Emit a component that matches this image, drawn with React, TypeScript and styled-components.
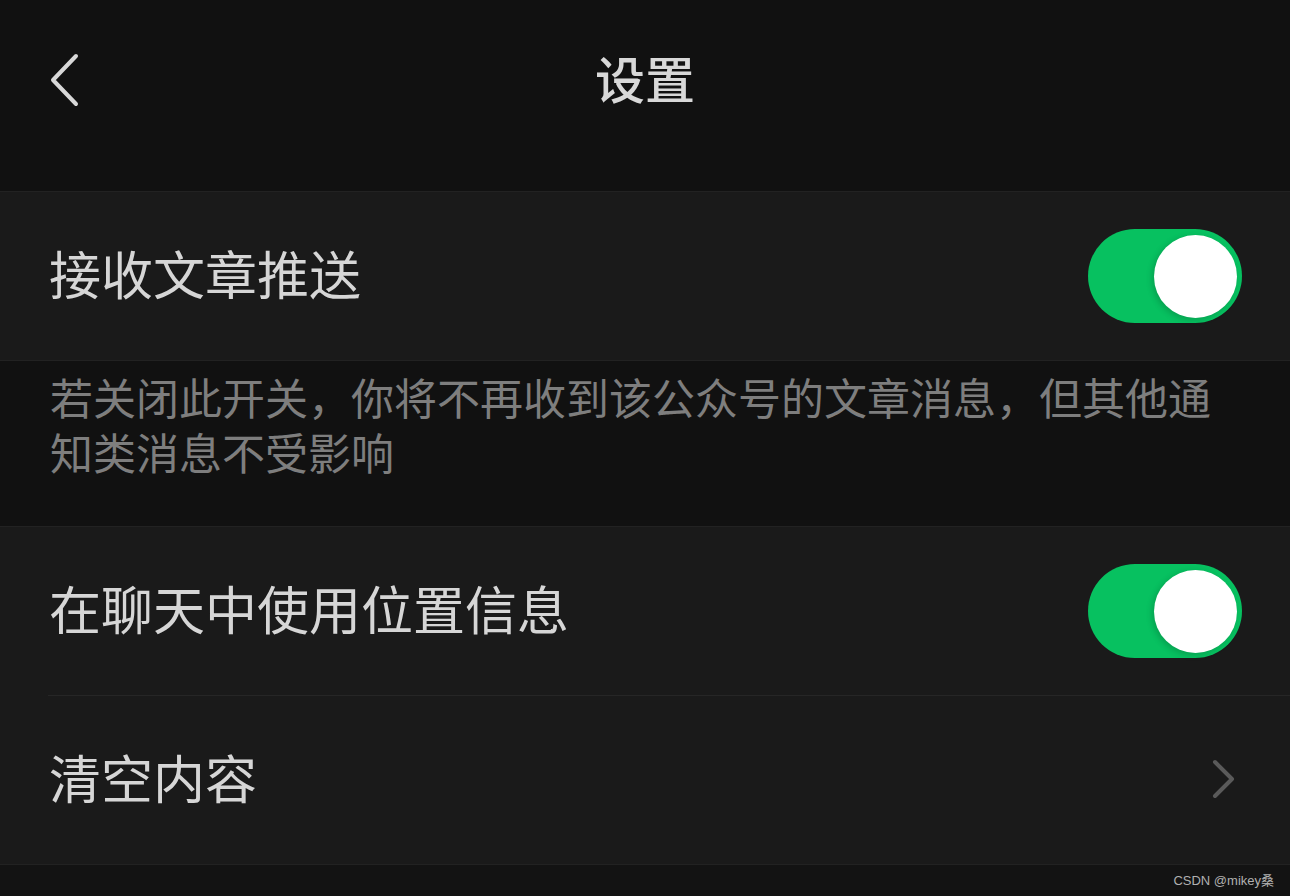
import React from "react";
import styled, { createGlobalStyle } from "styled-components";

const GlobalStyle = createGlobalStyle`
  html, body {
    margin: 0;
    padding: 0;
    background: #111111;
  }
  body {
    font-family: "Noto Sans CJK SC", "Noto Sans", sans-serif;
  }
`;

const Page = styled.div`
  width: 1290px;
  height: 896px;
  background: #111111;
  display: flex;
  flex-direction: column;
  overflow: hidden;
`;

const Header = styled.div`
  height: 191px;
  display: flex;
  align-items: flex-start;
  position: relative;
  border-bottom: 1px solid #222222;
`;

const BackButton = styled.div`
  position: absolute;
  left: 49px;
  top: 52px;
  width: 34px;
  height: 56px;
  display: flex;
  align-items: center;
  justify-content: center;
`;

const Title = styled.div`
  flex: 1;
  text-align: center;
  margin-top: 41px;
  font-size: 50px;
  line-height: 72px;
  font-weight: 500;
  color: #d8d8d8;
`;

const Group = styled.div`
  background: #1a1a1a;
  display: flex;
  flex-direction: column;
  border-bottom: 1px solid #222222;
`;

const Row = styled.div<{ divider?: boolean }>`
  height: 168px;
  margin-left: 48px;
  padding-right: 48px;
  display: flex;
  align-items: center;
  justify-content: space-between;
  border-bottom: ${(p) => (p.divider ? "1px solid #262626" : "none")};
`;

const Label = styled.div`
  font-size: 52px;
  line-height: 72px;
  color: #d6d6d6;
  padding-left: 1px;
  margin-bottom: 6px;
`;

const Switch = styled.div<{ on: boolean }>`
  width: 154px;
  height: 94px;
  border-radius: 47px;
  background: ${(p) => (p.on ? "#07c160" : "#3a3a3a")};
  display: flex;
  align-items: center;
  justify-content: ${(p) => (p.on ? "flex-end" : "flex-start")};
  padding: 0 5px;
  box-sizing: border-box;
`;

const Knob = styled.div`
  width: 83px;
  height: 83px;
  border-radius: 50%;
  background: #ffffff;
  box-shadow: -2px 2px 6px rgba(0, 0, 0, 0.18);
`;

const Tip = styled.div`
  height: 166px;
  box-sizing: border-box;
  padding: 8px 70px 0 50px;
  font-size: 43px;
  line-height: 55px;
  color: #7e7e7e;
  border-bottom: 1px solid #222222;
`;

const Footer = styled.div`
  flex: 1;
  display: flex;
  justify-content: flex-end;
  align-items: center;
  padding-right: 16px;
  padding-bottom: 2px;
  background: #131313;
`;

const Watermark = styled.span`
  font-family: "Liberation Sans", "Noto Sans CJK SC", sans-serif;
  font-size: 13px;
  color: #b0b0b0;
`;

const BackIcon = () => (
  <svg width="34" height="56" viewBox="0 0 34 56">
    <polyline
      points="27,4 4,28 27,52"
      fill="none"
      stroke="#d8d8d8"
      strokeWidth="4"
      strokeLinecap="round"
      strokeLinejoin="round"
    />
  </svg>
);

const Chevron = () => (
  <svg width="26" height="40" viewBox="0 0 26 40" style={{ marginRight: 5, marginBottom: 3 }}>
    <polyline
      points="4,3 21,20 4,37"
      fill="none"
      stroke="#5a5a5a"
      strokeWidth="4"
      strokeLinecap="round"
      strokeLinejoin="round"
    />
  </svg>
);

export default function App() {
  return (
    <Page>
      <GlobalStyle />
      <Header>
        <BackButton>
          <BackIcon />
        </BackButton>
        <Title>设置</Title>
      </Header>
      <Group>
        <Row>
          <Label>接收文章推送</Label>
          <Switch on>
            <Knob />
          </Switch>
        </Row>
      </Group>
      <Tip>若关闭此开关，你将不再收到该公众号的文章消息，但其他通知类消息不受影响</Tip>
      <Group>
        <Row divider>
          <Label>在聊天中使用位置信息</Label>
          <Switch on>
            <Knob />
          </Switch>
        </Row>
        <Row>
          <Label>清空内容</Label>
          <Chevron />
        </Row>
      </Group>
      <Footer>
        <Watermark>CSDN @mikey桑</Watermark>
      </Footer>
    </Page>
  );
}
